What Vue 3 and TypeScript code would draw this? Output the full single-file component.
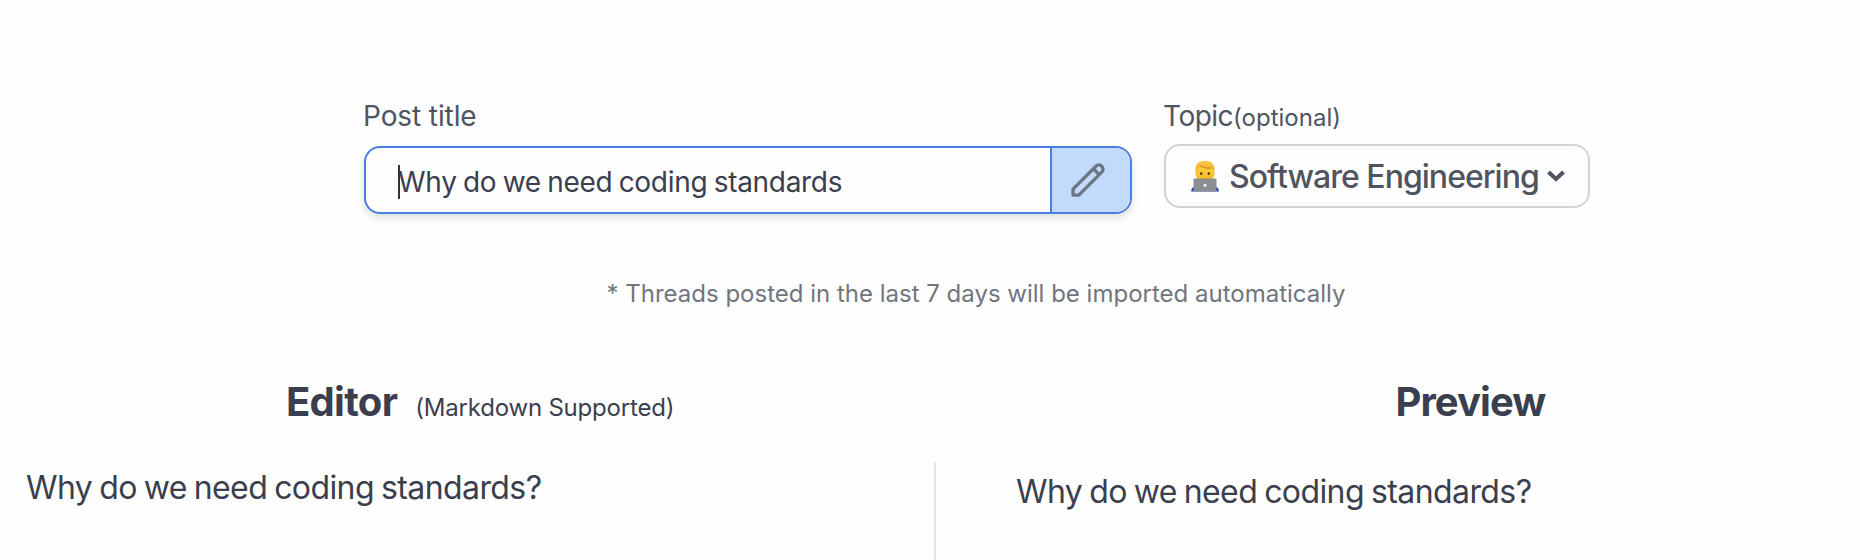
<script setup lang="ts">
const title = 'Why do we need coding standards'
const content = 'Why do we need coding standards?'
</script>

<template>
  <main class="page">
    <section class="form">
      <div class="title-field">
        <label class="label">Post title</label>
        <div class="input">
          <div class="value"><i class="caret"></i><span class="value-text">{{ title }}</span></div>
          <button class="edit" type="button" aria-label="Edit title">
            <svg viewBox="0 0 24 24" width="40" height="40" fill="none" stroke="currentColor" stroke-width="2" stroke-linecap="round" stroke-linejoin="round">
              <path d="M15.232 5.232l3.536 3.536m-2.036-5.036a2.5 2.5 0 113.536 3.536L6.500 21.036H3v-3.572L16.732 3.732z" />
            </svg>
          </button>
        </div>
      </div>
      <div class="topic-field">
        <label class="label"><span class="topic">Topic</span><small>(optional)</small></label>
        <button class="select" type="button">
          <svg class="person" viewBox="0 0 28 32" width="28" height="32">
            <defs>
              <linearGradient id="face" x1="0" y1="0" x2="0" y2="1"><stop offset="0" stop-color="#ffd640" /><stop offset="1" stop-color="#f7b51c" /></linearGradient>
              <linearGradient id="hair" x1="0" y1="0" x2="0" y2="1"><stop offset="0" stop-color="#ffc94a" /><stop offset="1" stop-color="#eda21f" /></linearGradient>
            </defs>
            <path d="M0 31.500Q.5 27 4 26.500H24Q27.500 27 28 31.500Z" fill="#2947b5" />
            <path d="M5 12Q5 4 14 4T23 12Q24.500 13 23 15.500Q21.500 22 14 22T5 15.500Q3.500 13 5 12Z" fill="url(#face)" />
            <path d="M4.800 12.500C3.500 4.500 7.500 .8 14 .8S24.800 4.500 23.200 12.500Q22.500 9.500 20.500 8Q13.500 9.200 9 6.200Q6.500 8.500 4.800 12.500Z" fill="url(#hair)" />
            <path d="M9 5.800Q13 9 20.500 8" fill="none" stroke="#b8741a" stroke-width=".9" />
            <ellipse cx="10.200" cy="13.500" rx="1.200" ry="1.600" fill="#5c3818" />
            <ellipse cx="17.800" cy="13.500" rx="1.200" ry="1.600" fill="#5c3818" />
            <rect x="2.500" y="18.500" width="23" height="13" rx="1" fill="#8b8e92" />
            <circle cx="14" cy="25.200" r="1.500" fill="#f4f4f4" />
          </svg>
          <span class="choice">Software Engineering</span>
          <svg class="chevron" viewBox="0 0 18 12" width="18" height="12" fill="none" stroke="currentColor" stroke-width="4"><path d="M1.500 2L9 9L16.500 2" /></svg>
        </button>
      </div>
    </section>
    <p class="note">* Threads posted in the last 7 days will be imported automatically</p>
    <section class="panes">
      <article class="pane editor">
        <header><h2>Editor</h2><small>(Markdown Supported)</small></header>
        <div class="body">{{ content }}</div>
      </article>
      <article class="pane preview">
        <header><h2>Preview</h2></header>
        <div class="body">{{ content }}</div>
      </article>
    </section>
  </main>
</template>

<style>
html, body { background: #fefefe; }
</style>

<style scoped>
* { box-sizing: border-box; }
.page { height: 560px; overflow: hidden; font-family: Inter, "Liberation Sans", sans-serif; color: #3b3f4d; white-space: nowrap; }
p, h2 { margin: 0; }
button { font: inherit; margin: 0; }
svg { flex-shrink: 0; }
.form { display: flex; gap: 32px; padding: 96px 0 0 364px; }
.label { display: flex; align-items: baseline; height: 40px; line-height: 40px; margin-left: -1px; font-size: 28px; letter-spacing: -.1px; color: #50545f; }
.label small { font-size: 24px; letter-spacing: 0; }
.topic { letter-spacing: -.5px; }
.title-field { width: 768px; }
.input { display: flex; height: 68px; margin-top: 10px; border: 2px solid #4a80df; border-radius: 16px; overflow: hidden; box-shadow: 0 4px 8px rgba(0,0,0,.13); }
.value { flex: 1; display: flex; align-items: center; padding: 3px 0 0 32px; font-size: 28px; letter-spacing: -.3px; word-spacing: -1.2px; }
.caret { width: 2px; height: 34px; margin-right: -2px; background: #30333d; }
.edit { width: 80px; border: 0; border-left: 2px solid #4a80df; background: #c2dafc; color: #6b7683; padding: 0 6px 0 0; display: grid; place-items: center; }
.select { display: flex; align-items: center; width: 426px; height: 64px; margin-top: 8px; padding: 0 23px 0 26px; border: 2px solid #d2d3d5; border-radius: 16px; background: #fefefe; color: #50545f; font-size: 32px; font-weight: 500; }
.person { margin-right: 10px; margin-left: -1px; }
.choice { letter-spacing: -.98px; }
.chevron { margin-left: auto; }
.note { margin-top: 61px; height: 40px; line-height: 38px; padding-left: 92px; text-align: center; font-size: 24px; color: #71757d; }
.panes { display: flex; margin-top: 63px; }
.pane { width: 934px; }
.preview { width: 926px; }
header { display: flex; align-items: baseline; height: 84px; padding-left: 286px; line-height: 48px; }
.preview header { padding-left: 461.5px; }
h2 { font-size: 40px; letter-spacing: -.7px; }
header small { margin-left: 18px; font-size: 24px; letter-spacing: -.2px; }
.preview h2 { letter-spacing: -.95px; }
.body { height: 120px; padding: 6px 0 0 26px; font-size: 32px; line-height: 39px; letter-spacing: -.58px; word-spacing: -1.5px; }
.preview .body { padding: 10px 0 0 80px; border-left: 2px solid #e4e5e7; }
</style>
